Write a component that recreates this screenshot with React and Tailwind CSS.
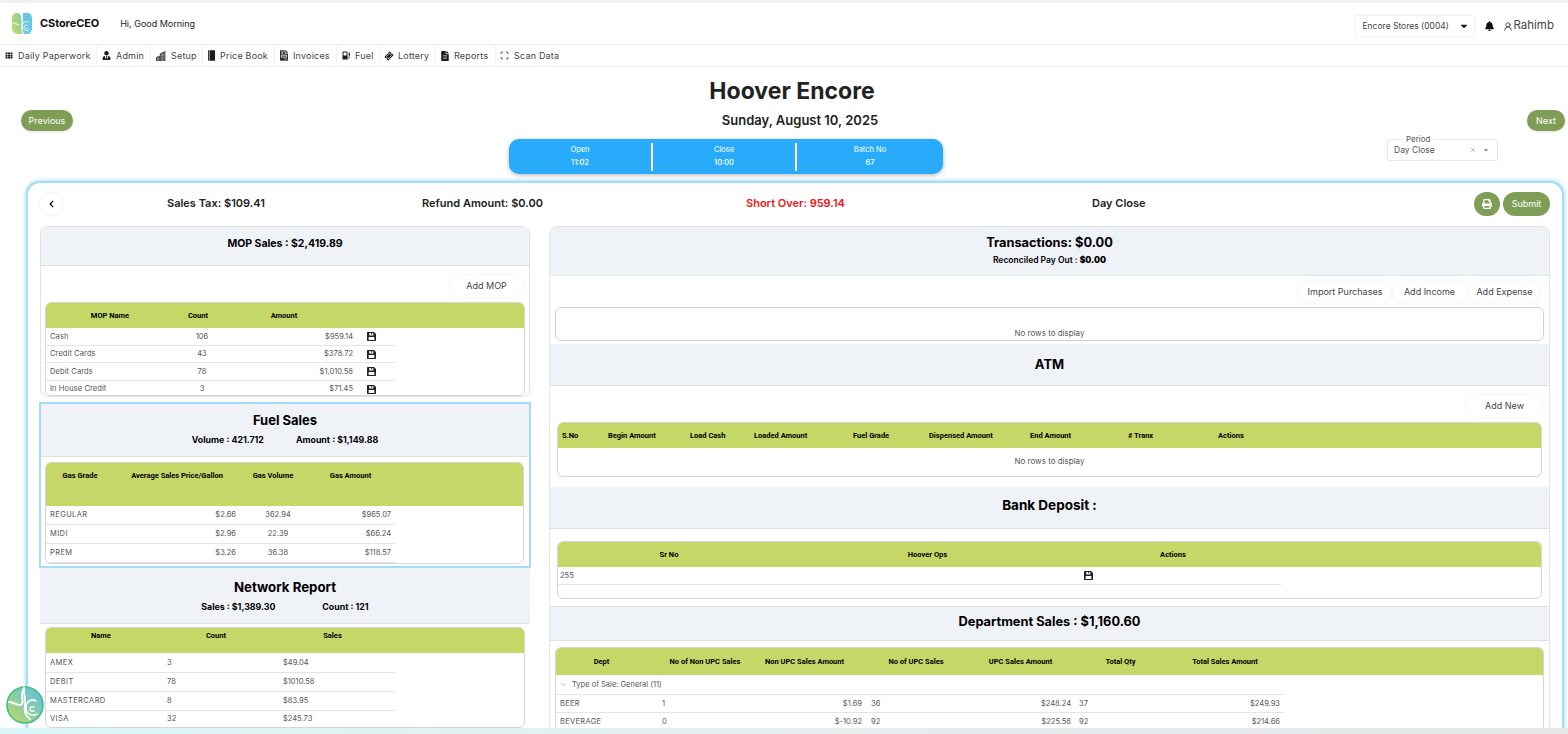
import React from 'react';
import { FaBell, FaPrint, FaChevronLeft, FaUserTie, FaTh, FaTicketAlt, FaFileAlt, FaFileInvoice, FaCaretDown } from 'react-icons/fa';
import { BsBuildingsFill, BsFuelPumpFill } from 'react-icons/bs';
import { LuScan, LuUserRound, LuChevronDown, LuX } from 'react-icons/lu';

// ── Logo marks ─────────────────────────────────────────────────────────────
const Logo = ({ className }) => (
  <svg viewBox="0 0 44 44" className={className}>
    <defs>
      <linearGradient id="logoLeft" x1="0" y1="1" x2="1" y2="0">
        <stop offset="0" stopColor="#c8dc62" />
        <stop offset="1" stopColor="#7fcba6" />
      </linearGradient>
    </defs>
    <path d="M2 12C2 4 7 1 12 1c5 0 7 3 8 8 1 6 2 9 1 14-1 6 0 12 2 20H14C6 43 2 38 2 32z" fill="url(#logoLeft)" />
    <path d="M24 1h8c7 0 10 4 10 11v20c0 7-4 11-10 11h-6c-3-6-3-12-2-19 1-8-1-15 0-23z" fill="#69c6e4" />
    <path d="M4 21c4 1 8 3 11 3" fill="none" stroke="#fff" strokeWidth="2" strokeLinecap="round" />
    <path d="M35 19c-6-3-12 1-12 8 0 7 7 11 13 8" fill="none" stroke="#fff" strokeWidth="1.6" strokeLinecap="round" />
    <path d="M33 26c-2-2-6-1-6 2.500s4 4.500 6 2.500" fill="none" stroke="#fff" strokeWidth="1.6" strokeLinecap="round" />
  </svg>
);

const RoundLogo = ({ className }) => (
  <svg viewBox="0 0 38 38" className={className}>
    <defs>
      <linearGradient id="logoRound" x1="0" y1="1" x2="1" y2="0">
        <stop offset="0" stopColor="#c8dc62" />
        <stop offset="0.55" stopColor="#80cbb0" />
        <stop offset="1" stopColor="#5fbfe6" />
      </linearGradient>
    </defs>
    <circle cx="19" cy="19" r="18" fill="url(#logoRound)" stroke="#3fc07d" strokeWidth="1.6" />
    <path d="M3 16c5 0 9 4 12 3 3-2 1-7 1-10 0-3 1-5 2-7" fill="none" stroke="#fff" strokeWidth="2" strokeLinecap="round" />
    <path d="M18 2c-1 6 2 10 1 16-1 5-1 11 5 15" fill="none" stroke="#fff" strokeWidth="1.8" strokeLinecap="round" />
    <path d="M30 15c-5-3-10 1-10 7s6 9 11 6" fill="none" stroke="#fff" strokeWidth="1.6" strokeLinecap="round" />
    <path d="M28 21c-2-1-4 0-4 2s2 3 4 2" fill="none" stroke="#fff" strokeWidth="1.4" strokeLinecap="round" />
  </svg>
);

// Floppy used in the action columns
const SaveIcon = () => (
  <svg viewBox="0 0 12 12" className="w-[9px] h-[9px]">
    <path
      fillRule="evenodd"
      fill="#222"
      d="M1 0h8.500L12 2.500V11a1 1 0 0 1-1 1H1a1 1 0 0 1-1-1V1a1 1 0 0 1 1-1zM3 1.200V4.500h5.500V1.200H7v2H5.500v-2zM2.200 6.500v4.300h7.600V6.500z"
    />
  </svg>
);

const BookIcon = () => (
  <svg viewBox="0 0 8 12" className="w-[7px] h-[11px]">
    <path fill="#1c1c1c" d="M0 0h8v12H0z" />
    <path fill="#fff" d="M1 0h.700v12H1z" />
  </svg>
);

// ── Top nav ────────────────────────────────────────────────────────────────
const NAV = [
  { label: 'Daily Paperwork', icon: <FaTh className="w-[8px] h-[7px]" />, w: 'w-[97px]', pad: 'pl-[5px]' },
  { label: 'Admin', icon: <FaUserTie className="w-[9px] h-[9px]" />, w: 'w-[54px]', pad: 'pl-[5px]' },
  { label: 'Setup', icon: <BsBuildingsFill className="w-[10px] h-[10px] text-[#555]" />, w: 'w-[52px]', pad: 'pl-[5px]' },
  { label: 'Price Book', icon: <BookIcon />, w: 'w-[72px]', pad: 'pl-[5px]' },
  { label: 'Invoices', icon: <FaFileInvoice className="w-[8px] h-[11px] text-[#333]" />, w: 'w-[62px]', pad: 'pl-[5px]' },
  { label: 'Fuel', icon: <BsFuelPumpFill className="w-[8px] h-[9px]" />, w: 'w-[43px]', pad: 'pl-[5px]' },
  { label: 'Lottery', icon: <FaTicketAlt className="w-[8px] h-[8px] -rotate-45" />, w: 'w-[56px]', pad: 'pl-[5px]' },
  { label: 'Reports', icon: <FaFileAlt className="w-[8px] h-[10px]" />, w: 'w-[60px]', pad: 'pl-[5px]' },
  { label: 'Scan Data', icon: <LuScan className="w-[9px] h-[9px]" />, w: 'w-[70px]', pad: 'pl-[4px]', last: true },
];

const headText = "text-[7.5px] font-bold text-black [font-family:Roboto,sans-serif]";

// ── Grid with the green header ─────────────────────────────────────────────
const Grid = ({ cols, rows, headH, wrap, rowHs, extra, headAlign = 'items-center' }) => (
  <div className={`border border-[#d3d6da] rounded-[6px] overflow-hidden bg-white ${wrap}`}>
    <div className={`flex bg-[#c5d867] ${headH} ${headAlign}`}>
      {cols.map((c) => (
        <div key={c.t} className={`${c.w} ${c.head} ${headText} shrink-0 whitespace-nowrap`}>{c.t}</div>
      ))}
    </div>
    {extra}
    {rows.map((r, i) => (
      <div key={i} className={`flex w-fit items-center border-b border-[#e3e5e8] ${rowHs[i]}`}>
        {cols.map((c, j) => (
          <div key={c.t} className={`${c.w} ${c.cell} text-[7.5px] text-[#555] shrink-0 whitespace-nowrap`}>
            {r[j] === 'save' ? <SaveIcon /> : r[j]}
          </div>
        ))}
      </div>
    ))}
  </div>
);

const SectionHead = ({ h, children, top }) => (
  <div className={`bg-[#eff2f7] border-b border-[#dfe1e5] flex flex-col items-center justify-center text-black ${h} ${top || ''}`}>
    {children}
  </div>
);

const PillButton = ({ w, children }) => (
  <button className={`h-[22px] ${w} rounded-[11px] bg-white shadow-[0_0_4px_rgba(0,0,0,0.06)] text-[9px] text-[#444] flex items-center justify-center whitespace-nowrap`}>
    {children}
  </button>
);

// ── Column definitions ─────────────────────────────────────────────────────
const mopCols = [
  { t: 'MOP Name', w: 'w-[128px]', head: 'text-center', cell: 'pl-[4px] tracking-[0.1px]' },
  { t: 'Count', w: 'w-[48px]', head: 'text-center', cell: 'text-center pl-[8px]' },
  { t: 'Amount', w: 'w-[136px]', head: 'text-center pr-[12px]', cell: 'text-right pr-[5px]' },
  { t: '', w: 'w-[37px]', head: '', cell: 'pl-[9px]' },
];
const mopRows = [
  ['Cash', '106', '$959.14', 'save'],
  ['Credit Cards', '43', '$378.72', 'save'],
  ['Debit Cards', '78', '$1,010.58', 'save'],
  ['In House Credit', '3', '$71.45', 'save'],
];
const fuelCols = [
  { t: 'Gas Grade', w: 'w-[68px]', head: 'text-center', cell: 'pl-[4px] tracking-[0.4px]' },
  { t: 'Average Sales Price/Gallon', w: 'w-[126px]', head: 'text-center', cell: 'text-right pr-[4px]' },
  { t: 'Gas Volume', w: 'w-[66px]', head: 'text-center', cell: 'text-center pl-[10px]' },
  { t: 'Gas Amount', w: 'w-[89px]', head: 'text-center', cell: 'text-right pr-[4px]' },
];
const fuelRows = [
  ['REGULAR', '$2.66', '362.94', '$965.07'],
  ['MIDI', '$2.96', '22.39', '$66.24'],
  ['PREM', '$3.26', '36.38', '$118.57'],
];
const netCols = [
  { t: 'Name', w: 'w-[116px]', head: 'text-center pr-[6px]', cell: 'pl-[4px] tracking-[0.4px]' },
  { t: 'Count', w: 'w-[116px]', head: 'text-center pr-[8px]', cell: 'pl-[5px]' },
  { t: 'Sales', w: 'w-[117px]', head: 'text-center pr-[8px]', cell: 'pl-[5px]' },
];
const netRows = [
  ['AMEX', '3', '$49.04'],
  ['DEBIT', '78', '$1010.58'],
  ['MASTERCARD', '8', '$83.95'],
  ['VISA', '32', '$245.73'],
];
const atmCols = [
  ['S.No', 'w-[50px] pl-[4px]'], ['Begin Amount', 'w-[82px]'], ['Load Cash', 'w-[64px]'], ['Loaded Amount', 'w-[99px]'],
  ['Fuel Grade', 'w-[76px]'], ['Dispensed Amount', 'w-[101px]'], ['End Amount', 'w-[98px]'], ['# Tranx', 'w-[90px]'], ['Actions', 'w-[60px]'],
];
const bankCols = [
  { t: 'Sr No', w: 'w-[222px]', head: 'text-center', cell: 'pl-[2px]' },
  { t: 'Hoover Ops', w: 'w-[295px]', head: 'text-center', cell: '' },
  { t: 'Actions', w: 'w-[206px]', head: 'text-center pr-[10px]', cell: 'pl-[9px]' },
];
const deptCols = [
  { t: 'Dept', w: 'w-[101px]', head: 'text-center pr-[10px]', cell: 'pl-[4px] tracking-[0.3px]' },
  { t: 'No of Non UPC Sales', w: 'w-[96px]', head: 'text-center', cell: 'pl-[5px]' },
  { t: 'Non UPC Sales Amount', w: 'w-[113px]', head: 'text-center pr-[10px]', cell: 'text-right pr-[4px]' },
  { t: 'No of UPC Sales', w: 'w-[100px]', head: 'text-center', cell: 'pl-[5px]' },
  { t: 'UPC Sales Amount', w: 'w-[109px]', head: 'text-center', cell: 'text-right pr-[4px]' },
  { t: 'Total Qty', w: 'w-[91px]', head: 'text-center', cell: 'pl-[4px]' },
  { t: 'Total Sales Amount', w: 'w-[118px]', head: 'text-center', cell: 'text-right pr-[4px]' },
];
const deptRows = [
  ['BEER', '1', '$1.69', '36', '$248.24', '37', '$249.93'],
  ['BEVERAGE', '0', '$-10.92', '92', '$225.58', '92', '$214.66'],
];

export default function App() {
  return (
    <div className="relative h-[734px] w-[1568px] overflow-hidden bg-white [font-family:Inter,'Liberation_Sans',sans-serif] text-[#222]">
      <div className="h-[3px] bg-[#f0f1f2]" />

      {/* ── Header ───────────────────────────────────────────────────── */}
      <div className="h-[42px] flex items-center border-b border-[#ebedef] pl-[11px] pr-[14px]">
        <Logo className="w-[22px] h-[23px] shrink-0" />
        <span className="ml-[7px] text-[11px] font-bold text-[#111] tracking-[-0.1px]">CStoreCEO</span>
        <span className="ml-[21px] text-[9px] text-[#222]">Hi, Good Morning</span>
        <div className="ml-auto mt-[5px] flex items-center">
          <div className="w-[118px] h-[20px] bg-white rounded-[2px] shadow-[0_0_3px_rgba(0,0,0,0.15)] flex items-center pl-[6px] pr-[5px] text-[8.5px] text-[#444] whitespace-nowrap">
            Encore Stores (0004)
            <FaCaretDown className="ml-auto w-[10px] h-[10px] text-[#111]" />
          </div>
          <FaBell className="ml-[11px] w-[9px] h-[10px] text-[#111]" />
          <LuUserRound className="ml-[9px] w-[10px] h-[11px] text-[#333]" />
          <span className="text-[11.5px] text-[#444]">Rahimb</span>
        </div>
      </div>

      {/* ── Nav ──────────────────────────────────────────────────────── */}
      <div className="h-[22px] flex items-center border-b border-[#ebedef]">
        {NAV.map((n) => (
          <div key={n.label} className={`h-full ${n.w} ${n.pad} flex items-center gap-[5px] text-[9px] tracking-[0.2px] text-[#444] whitespace-nowrap ${n.last ? '' : 'border-r border-[#f1f2f4]'}`}>
            <span className="text-[#1c1c1c] flex items-center">{n.icon}</span>
            {n.label}
          </div>
        ))}
      </div>

      {/* ── Title block ──────────────────────────────────────────────── */}
      <div className="h-[24px] mt-[12px] pl-[16px] text-center text-[23px] leading-[24px] font-bold text-[#222]">Hoover Encore</div>
      <div className="h-[21px] mt-[7px] flex items-center pl-[21px] pr-[3px]">
        <button className="w-[52px] h-[21px] rounded-[11px] bg-[#7f9e55] text-white text-[9px] shadow-sm">Previous</button>
        <div className="flex-1 text-center text-[13px] font-semibold text-[#222]">Sunday, August 10, 2025</div>
        <button className="w-[38px] h-[21px] rounded-[11px] bg-[#7f9e55] text-white text-[9px] shadow-sm">Next</button>
      </div>

      <div className="h-[35px] mt-[8px] flex items-start">
        <div className="ml-[509px] w-[434px] h-[35px] rounded-[10px] bg-[#29abfb] shadow-[0_1px_4px_rgba(0,0,0,0.3)] flex items-center text-white">
          {[['Open', '11:02', 'w-[144px] border-r-2 border-white'], ['Close', '10:00', 'w-[144px] border-r-2 border-white'], ['Batch No', '67', 'flex-1']].map(([a, b, cls]) => (
            <div key={a} className={`h-[28px] ${cls} flex flex-col items-center justify-center gap-[5px] pb-[1px]`}>
              <span className="text-[7.5px] leading-[8px]">{a}</span>
              <span className="text-[7.5px] leading-[8px] font-medium">{b}</span>
            </div>
          ))}
        </div>
        <div className="relative ml-[444px] w-[111px] h-[22px] border border-[#e6e8ea] rounded-[2px] flex items-center pl-[6px] pr-[8px] text-[8.5px] text-[#555]">
          <span className="absolute -top-[6px] left-[15px] px-[3px] bg-white text-[8px] leading-[10px] text-[#555]">Period</span>
          Day Close
          <LuX className="ml-auto w-[6px] h-[6px] text-[#777]" />
          <FaCaretDown className="ml-[7px] w-[6px] h-[6px] text-[#777]" />
        </div>
      </div>

      {/* ── Main card ────────────────────────────────────────────────── */}
      <div className="mt-[7px] ml-[26px] w-[1538px] h-[600px] border-2 border-b-0 border-[#a5dcf9] rounded-t-[14px] shadow-[0_0_4px_rgba(90,190,245,0.7)] bg-white">
        <div className="h-[43px] pb-[2px] flex items-center pl-[12px] pr-[12px] text-[11px] font-semibold text-[#222] whitespace-nowrap">
          <div className="w-[127px] shrink-0">
            <button className="w-[22px] h-[22px] rounded-full bg-white shadow-[0_0_4px_rgba(0,0,0,0.08)] flex items-center justify-center">
              <FaChevronLeft className="w-[7px] h-[8px] text-black" />
            </button>
          </div>
          <div className="w-[255px] shrink-0">Sales Tax: $109.41</div>
          <div className="w-[324px] shrink-0">Refund Amount: $0.00</div>
          <div className="w-[346px] shrink-0 text-[#f01414]">Short Over: 959.14</div>
          <div>Day Close</div>
          <button className="ml-auto w-[26px] h-[24px] rounded-[12px] bg-[#7f9e55] flex items-center justify-center">
            <FaPrint className="w-[10px] h-[10px] text-white" />
          </button>
          <button className="ml-[3px] w-[47px] h-[24px] rounded-[12px] bg-[#7f9e55] text-white text-[9px] font-normal">Submit</button>
        </div>

        <div className="flex pl-[12px] gap-[19px]">
          {/* ── Left column ──────────────────────────────────────────── */}
          <div className="w-[490px] shrink-0">
            <div className="h-[171px] border border-[#dfe1e5] rounded-[8px] overflow-hidden">
              <SectionHead h="h-[39px] pb-[5px]"><div className="text-[10.5px] font-bold">MOP Sales : $2,419.89</div></SectionHead>
              <div className="h-[36px] flex justify-end items-start pt-[9px] pr-[6px]"><PillButton w="w-[73px]">Add MOP</PillButton></div>
              <Grid cols={mopCols} rows={mopRows} headH="h-[25px]" wrap="mx-[4px] h-[94px]" rowHs={['h-[18px]', 'h-[17px]', 'h-[18px]', 'h-[17px]']} />
            </div>

            <div className="mt-[5px] -mx-[1px] h-[166px] border-2 border-[#a5dcf9]">
              <SectionHead h="h-[53px] pb-[3px]">
                <div className="text-[13px] leading-[18px] font-bold">Fuel Sales</div>
                <div className="mt-[5px] flex gap-[32px] text-[8.8px] leading-[12px] font-bold">
                  <span>Volume : 421.712</span><span>Amount : $1,149.88</span>
                </div>
              </SectionHead>
              <Grid cols={fuelCols} rows={fuelRows} headH="h-[43px] pt-[7px]" headAlign="items-start" wrap="mt-[5px] ml-[4px] mr-[5px] h-[102px]" rowHs={['h-[19px]', 'h-[19px]', 'h-[19px]']} />
            </div>

            <div>
              <SectionHead h="h-[56px] pb-[1px]">
                <div className="text-[13.250px] leading-[18px] font-bold">Network Report</div>
                <div className="mt-[5px] flex gap-[47px] text-[8.8px] leading-[12px] font-bold">
                  <span>Sales : $1,389.30</span><span>Count : 121</span>
                </div>
              </SectionHead>
              <Grid cols={netCols} rows={netRows} headH="h-[25px] pt-[2px]" headAlign="items-start" wrap="mt-[3px] mx-[5px] h-[101px]" rowHs={['h-[20px]', 'h-[19px]', 'h-[19px]', 'h-[17px]']} />
            </div>
          </div>

          {/* ── Right column ─────────────────────────────────────────── */}
          <div className="w-[1001px] shrink-0 border-x border-[#e3e5e8] rounded-t-[8px] overflow-hidden">
            <SectionHead h="h-[50px] pb-[2px]" top="rounded-t-[8px] border-t border-[#e3e5e8]">
              <div className="text-[12.8px] leading-[18px] font-bold">Transactions: $0.00</div>
              <div className="mt-[3px] text-[8.5px] leading-[11px] font-semibold">Reconciled Pay Out : <b>$0.00</b></div>
            </SectionHead>
            <div className="h-[31px] flex justify-end items-start pt-[5px] pr-[10px]">
              <PillButton w="w-[92px]">Import Purchases</PillButton>
              <div className="ml-[2px]"><PillButton w="w-[73px]">Add Income</PillButton></div>
              <div className="ml-[4px]"><PillButton w="w-[69px]">Add Expense</PillButton></div>
            </div>
            <div className="mx-[5px] h-[34px] border border-[#cfd2d6] rounded-[6px] flex items-end justify-center text-[8px] leading-[14px] text-[#555]">No rows to display</div>

            <div className="mt-[3px]"><SectionHead h="h-[42px]"><div className="text-[13px] font-bold">ATM</div></SectionHead></div>
            <div className="h-[36px] flex justify-end items-start pt-[9px] pr-[7px]"><PillButton w="w-[75px]">Add New</PillButton></div>
            <div className="mx-[7px] h-[55px] border border-[#d3d6da] rounded-[6px] overflow-hidden">
              <div className={`h-[25px] bg-[#c5d867] flex items-center whitespace-nowrap ${headText}`}>
                {atmCols.map(([t, w]) => <div key={t} className={`${w} shrink-0`}>{t}</div>)}
              </div>
              <div className="h-[26px] flex items-center justify-center text-[8px] text-[#555]">No rows to display</div>
            </div>

            <div className="mt-[10px]"><SectionHead h="h-[42px] pb-[5px]"><div className="text-[13.5px] font-bold">Bank Deposit :</div></SectionHead></div>
            <Grid cols={bankCols} rows={[['255', '', 'save']]} headH="h-[25px]" wrap="mt-[12px] mx-[7px] h-[58px]" rowHs={['h-[18px]']} />

            <div className="mt-[7px]"><SectionHead h="h-[35px] pb-[3px]" top="border-t"><div className="text-[12.8px] font-bold">Department Sales : $1,160.60</div></SectionHead></div>
            <Grid
              cols={deptCols}
              rows={deptRows}
              headH="h-[27px]"
              wrap="mt-[6px] mx-[5px]"
              rowHs={['h-[18px]', 'h-[18px]']}
              extra={
                <div className="w-[729px] h-[20px] flex items-center pl-[4px] gap-[5px] border-b border-[#e3e5e8] text-[7.5px] text-[#555]">
                  <LuChevronDown className="w-[7px] h-[7px] text-[#888]" />
                  Type of Sale: General (11)
                </div>
              }
            />
          </div>
        </div>
      </div>

      {/* ── Overlays ─────────────────────────────────────────────────── */}
      <div className="absolute left-0 right-0 bottom-0 h-[6px] bg-gradient-to-r from-[#d8f6f8] via-[#e6eeee] to-[#e6e6e6]" />
      <RoundLogo className="absolute left-[6px] top-[686px] w-[38px] h-[38px]" />
    </div>
  );
}
